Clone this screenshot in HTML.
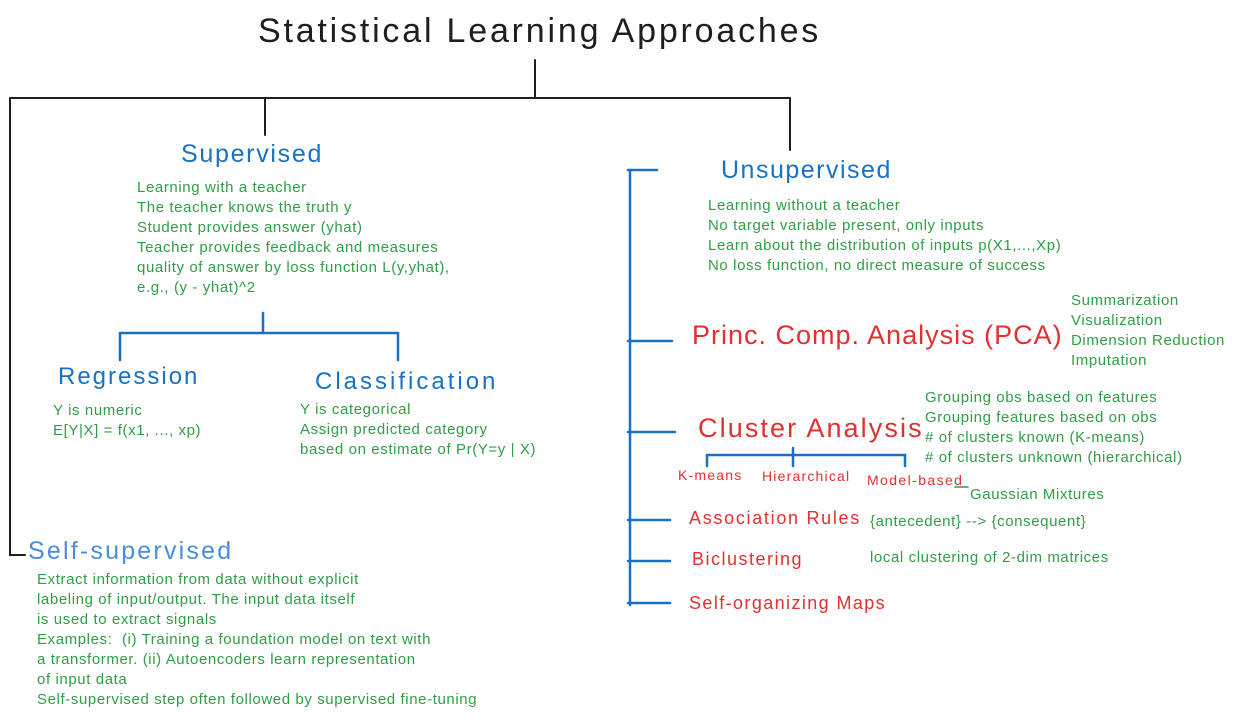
<!DOCTYPE html>
<html><head><meta charset="utf-8"><style>
html,body{margin:0;padding:0;background:#fff;}
body{width:1235px;height:719px;position:relative;overflow:hidden;font-family:"Liberation Sans",sans-serif;}
.t{position:absolute;white-space:nowrap;}
.g{color:#2f9e44;font-size:15px;line-height:20px;letter-spacing:0.6px;}
.b{color:#1971c2;}
.r{color:#e03131;}
svg{position:absolute;left:0;top:0;}
</style></head><body>
<svg width="1235" height="719" fill="none" stroke-linecap="round">
<g stroke="#1e1e1e" stroke-width="2">
<path d="M535 60 V98"/><path d="M10 98 H790"/><path d="M10 98 V555 H25"/>
<path d="M265 98 V135"/><path d="M790 98 V150"/>
</g>
<g stroke="#1971c2" stroke-width="2.5">
<path d="M630 170 V605"/>
<path d="M628 170 H657"/><path d="M628 341 H672"/><path d="M628 432 H675"/>
<path d="M628 520 H670"/><path d="M628 561 H670"/><path d="M628 603 H670"/>
<path d="M263 313 V333"/><path d="M120 333 H398"/><path d="M120 333 V360"/><path d="M398 333 V360"/>
<path d="M707 455 H905"/><path d="M707 455 V466"/><path d="M793 448 V466"/><path d="M905 455 V466"/>
</g>
<path d="M955 487 H968" stroke="#2f9e44" stroke-width="1.5"/>
</svg>
<div class="t" style="left:258px;top:12px;font-size:34px;color:#1e1e1e;letter-spacing:2.8px">Statistical Learning Approaches</div>

<div class="t b" style="left:181px;top:140px;font-size:25px;letter-spacing:1.7px">Supervised</div>
<div class="t g" style="left:137px;top:178px">Learning with a teacher<br>The teacher knows the truth y<br>Student provides answer (yhat)<br>Teacher provides feedback and measures<br>quality of answer by loss function L(y,yhat),<br>e.g., (y - yhat)^2</div>

<div class="t b" style="left:58px;top:363px;font-size:24px;letter-spacing:2px">Regression</div>
<div class="t g" style="left:53px;top:401px">Y is numeric<br>E[Y|X] = f(x1, ..., xp)</div>
<div class="t b" style="left:315px;top:368px;font-size:24px;letter-spacing:3px">Classification</div>
<div class="t g" style="left:300px;top:400px">Y is categorical<br>Assign predicted category<br>based on estimate of Pr(Y=y | X)</div>

<div class="t" style="left:28px;top:537px;font-size:25px;color:#4a8fd6;letter-spacing:2.2px">Self-supervised</div>
<div class="t g" style="left:37px;top:570px">Extract information from data without explicit<br>labeling of input/output. The input data itself<br>is used to extract signals<br>Examples:&nbsp; (i) Training a foundation model on text with<br>a transformer. (ii) Autoencoders learn representation<br>of input data<br>Self-supervised step often followed by supervised fine-tuning</div>

<div class="t b" style="left:721px;top:156px;font-size:25px;letter-spacing:1.5px">Unsupervised</div>
<div class="t g" style="left:708px;top:196px">Learning without a teacher<br>No target variable present, only inputs<br>Learn about the distribution of inputs p(X1,...,Xp)<br>No loss function, no direct measure of success</div>

<div class="t r" style="left:692px;top:320px;font-size:27px;letter-spacing:1px">Princ. Comp. Analysis (PCA)</div>
<div class="t g" style="left:1071px;top:291px">Summarization<br>Visualization<br>Dimension Reduction<br>Imputation</div>

<div class="t r" style="left:698px;top:413px;font-size:27px;letter-spacing:2.1px">Cluster Analysis</div>
<div class="t g" style="left:925px;top:388px">Grouping obs based on features<br>Grouping features based on obs<br># of clusters known (K-means)<br># of clusters unknown (hierarchical)</div>
<div class="t r" style="left:678px;top:467px;font-size:14px;letter-spacing:1.2px">K-means</div>
<div class="t r" style="left:762px;top:468px;font-size:14px;letter-spacing:1.2px">Hierarchical</div>
<div class="t r" style="left:867px;top:472px;font-size:14px;letter-spacing:1.4px">Model-based</div>
<div class="t g" style="left:970px;top:485px">Gaussian Mixtures</div>

<div class="t r" style="left:689px;top:508px;font-size:18px;letter-spacing:1.7px">Association Rules</div>
<div class="t g" style="left:870px;top:512px">{antecedent} --&gt; {consequent}</div>
<div class="t r" style="left:692px;top:549px;font-size:18px;letter-spacing:1.5px">Biclustering</div>
<div class="t g" style="left:870px;top:548px">local clustering of 2-dim matrices</div>
<div class="t r" style="left:689px;top:593px;font-size:18px;letter-spacing:1.4px">Self-organizing Maps</div>
</body></html>
